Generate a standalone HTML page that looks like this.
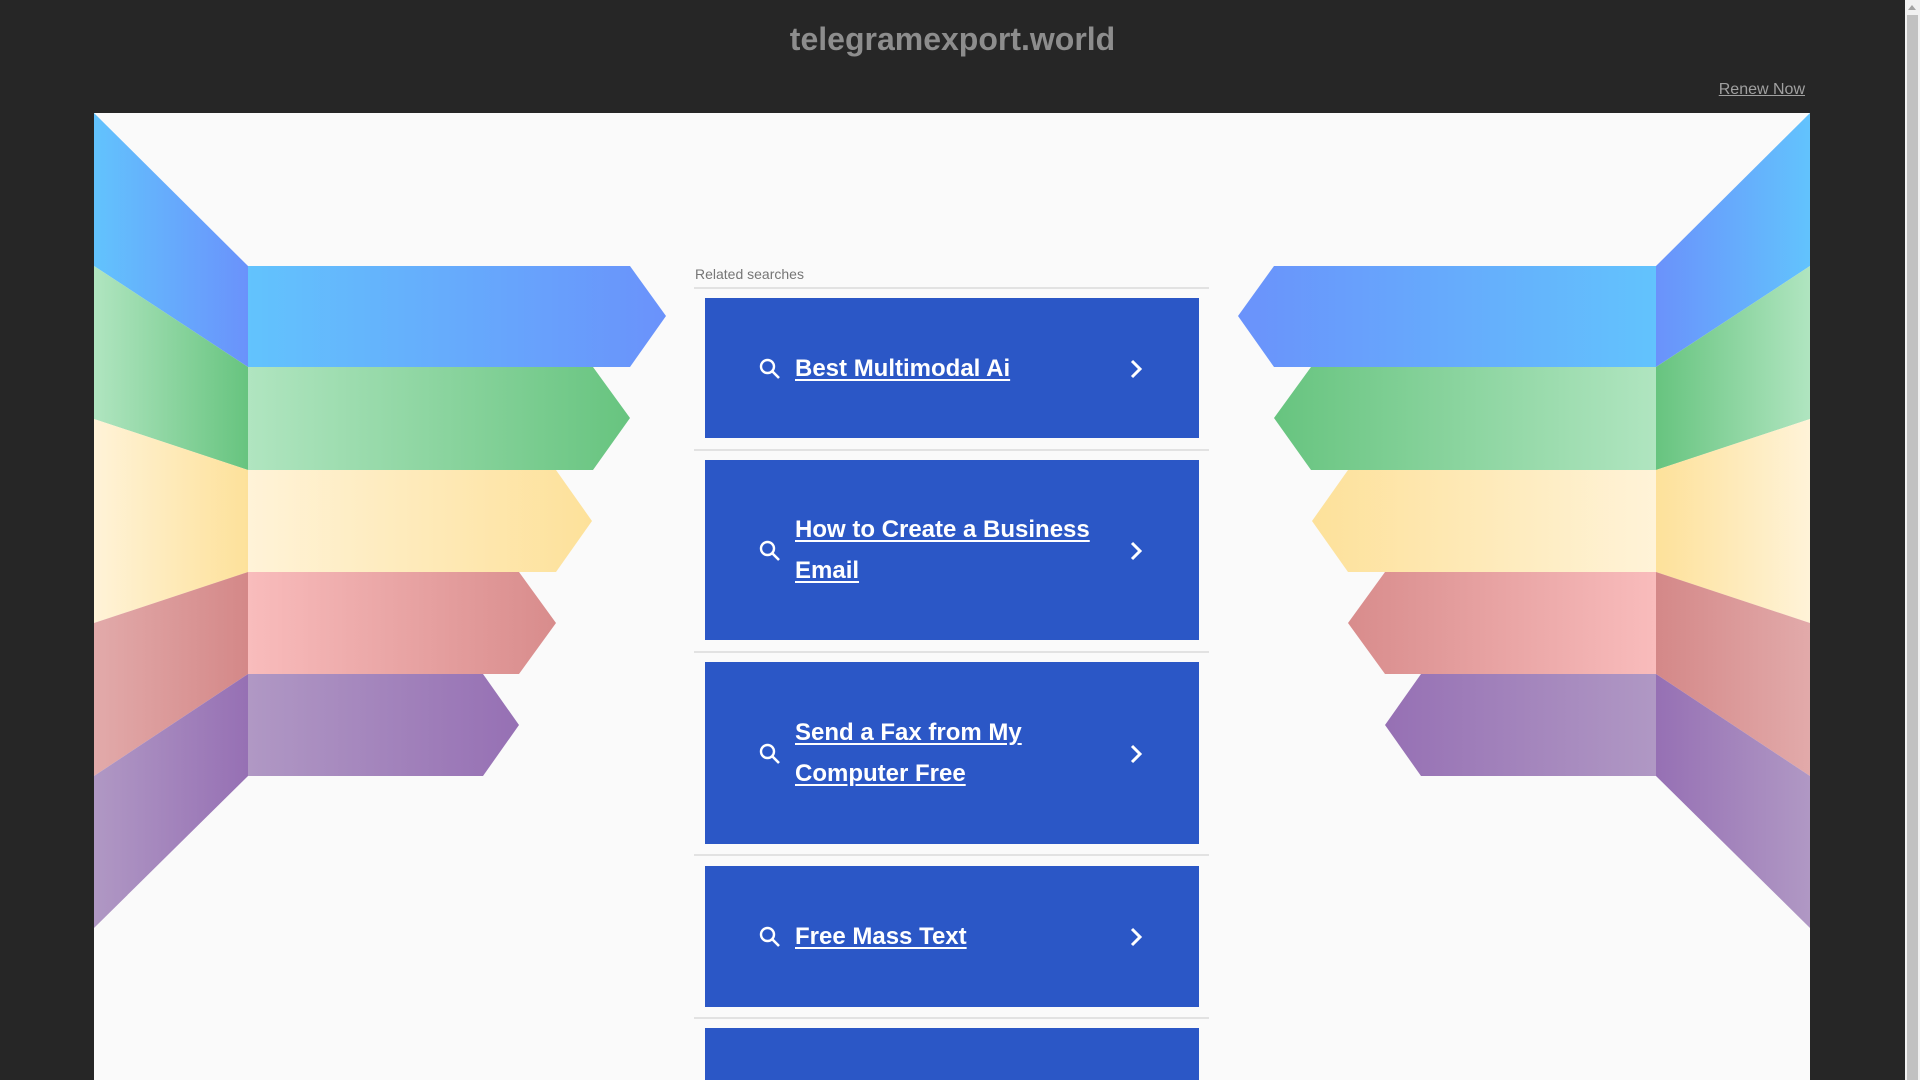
<!DOCTYPE html>
<html><head><meta charset="utf-8"><style>
html,body{margin:0;padding:0;width:1920px;height:1080px;overflow:hidden;background:#262626;font-family:"Liberation Sans",Arial,sans-serif;position:relative;}
.sb{position:absolute;left:1905px;top:0;width:15px;height:1080px;background:#f1f1f1;}
.sb .th{position:absolute;left:2px;top:15px;width:11px;height:1065px;background:#c1c1c1;}
.sb .ar{position:absolute;left:3px;top:5px;width:0;height:0;border-left:4.5px solid transparent;border-right:4.5px solid transparent;border-bottom:5px solid #a3a3a3;}
.title{position:absolute;left:0;width:1905px;top:21px;text-align:center;color:#8d8d8d;font-weight:bold;font-size:32px;}
.renew{position:absolute;right:115px;top:81px;color:#a0a0a0;font-size:16px;text-decoration:underline;}
.panel{position:absolute;left:94px;top:113px;width:1716px;height:967px;background:#fafafa;}
svg{position:absolute;left:0;top:0;}
.rs{position:absolute;left:695px;top:266px;font-size:14px;color:#767676;}
.hr{position:absolute;left:694px;width:515px;height:2px;background:#e2e2e2;}
.card{position:absolute;left:705px;width:494px;background:#2b57c6;display:flex;align-items:center;}
.card .t{position:absolute;left:90px;width:320px;color:#fff;font-weight:bold;font-size:24px;line-height:41px;text-decoration:underline;text-underline-offset:3px;}
.card svg{position:absolute;}
</style></head><body>
<div class="title">telegramexport.world</div>
<div class="renew">Renew Now</div>
<div class="panel"></div>
<svg width="1905" height="1080" viewBox="0 0 1905 1080">
<defs>
<linearGradient id="b" x1="0" x2="1"><stop offset="0" stop-color="#62c3fd"/><stop offset="1" stop-color="#6a92fb"/></linearGradient>
<linearGradient id="g" x1="0" x2="1"><stop offset="0" stop-color="#b0e5c0"/><stop offset="1" stop-color="#67c47f"/></linearGradient>
<linearGradient id="y" x1="0" x2="1"><stop offset="0" stop-color="#fff3d8"/><stop offset="1" stop-color="#fde19a"/></linearGradient>
<linearGradient id="r" x1="0" x2="1"><stop offset="0" stop-color="#f9bcbc"/><stop offset="1" stop-color="#d88c8c"/></linearGradient>
<linearGradient id="rw" x1="0" x2="1"><stop offset="0" stop-color="#e2aaaa"/><stop offset="1" stop-color="#d48888"/></linearGradient>
<linearGradient id="p" x1="0" x2="1"><stop offset="0" stop-color="#b098c4"/><stop offset="1" stop-color="#9670b4"/></linearGradient>
</defs>
<g id="L">
<polygon fill="url(#b)" points="94,113 248,266 248,367 94,266"/>
<polygon fill="url(#g)" points="94,266 248,367 248,470 94,419"/>
<polygon fill="url(#y)" points="94,419 248,470 248,572 94,623"/>
<polygon fill="url(#rw)" points="94,623 248,572 248,674 94,776"/>
<polygon fill="url(#p)" points="94,776 248,674 248,776 94,928"/>
<polygon fill="url(#b)" points="248,266 630,266 666,316 630,367 248,367"/>
<polygon fill="url(#g)" points="248,367 593,367 630,418 593,470 248,470"/>
<polygon fill="url(#y)" points="248,470 556,470 592,521 556,572 248,572"/>
<polygon fill="url(#r)" points="248,572 519,572 556,623 519,674 248,674"/>
<polygon fill="url(#p)" points="248,674 483,674 519,725 483,776 248,776"/>
</g>
<use href="#L" transform="translate(1904,0) scale(-1,1)"/>
</svg>
<div class="rs">Related searches</div>
<div class="hr" style="top:287px"></div>
<div class="hr" style="top:449px"></div>
<div class="hr" style="top:651px"></div>
<div class="hr" style="top:854px"></div>
<div class="hr" style="top:1017px"></div>

<div class="card" style="top:298px;height:140px"><svg style="left:53px;top:59px" width="24" height="24" viewBox="0 0 24 24"><circle cx="9.5" cy="9.5" r="6.5" fill="none" stroke="#fff" stroke-width="2.4"/><path d="M14.5 14.5 L21 21" stroke="#fff" stroke-width="2.6"/></svg><div class="t">Best Multimodal Ai</div><svg style="left:423px;top:60px" width="16" height="22" viewBox="0 0 16 22"><path d="M4 3 L12 11 L4 19" fill="none" stroke="#fff" stroke-width="3"/></svg></div>

<div class="card" style="top:460px;height:180px"><svg style="left:53px;top:79px" width="24" height="24" viewBox="0 0 24 24"><circle cx="9.5" cy="9.5" r="6.5" fill="none" stroke="#fff" stroke-width="2.4"/><path d="M14.5 14.5 L21 21" stroke="#fff" stroke-width="2.6"/></svg><div class="t">How to Create a Business Email</div><svg style="left:423px;top:80px" width="16" height="22" viewBox="0 0 16 22"><path d="M4 3 L12 11 L4 19" fill="none" stroke="#fff" stroke-width="3"/></svg></div>

<div class="card" style="top:662px;height:182px"><svg style="left:53px;top:80px" width="24" height="24" viewBox="0 0 24 24"><circle cx="9.5" cy="9.5" r="6.5" fill="none" stroke="#fff" stroke-width="2.4"/><path d="M14.5 14.5 L21 21" stroke="#fff" stroke-width="2.6"/></svg><div class="t">Send a Fax from My Computer Free</div><svg style="left:423px;top:81px" width="16" height="22" viewBox="0 0 16 22"><path d="M4 3 L12 11 L4 19" fill="none" stroke="#fff" stroke-width="3"/></svg></div>

<div class="card" style="top:866px;height:141px"><svg style="left:53px;top:59px" width="24" height="24" viewBox="0 0 24 24"><circle cx="9.5" cy="9.5" r="6.5" fill="none" stroke="#fff" stroke-width="2.4"/><path d="M14.5 14.5 L21 21" stroke="#fff" stroke-width="2.6"/></svg><div class="t">Free Mass Text</div><svg style="left:423px;top:60px" width="16" height="22" viewBox="0 0 16 22"><path d="M4 3 L12 11 L4 19" fill="none" stroke="#fff" stroke-width="3"/></svg></div>

<div class="card" style="top:1028px;height:52px"></div>

<div class="sb"><div class="ar"></div><div class="th"></div></div>
</body></html>
